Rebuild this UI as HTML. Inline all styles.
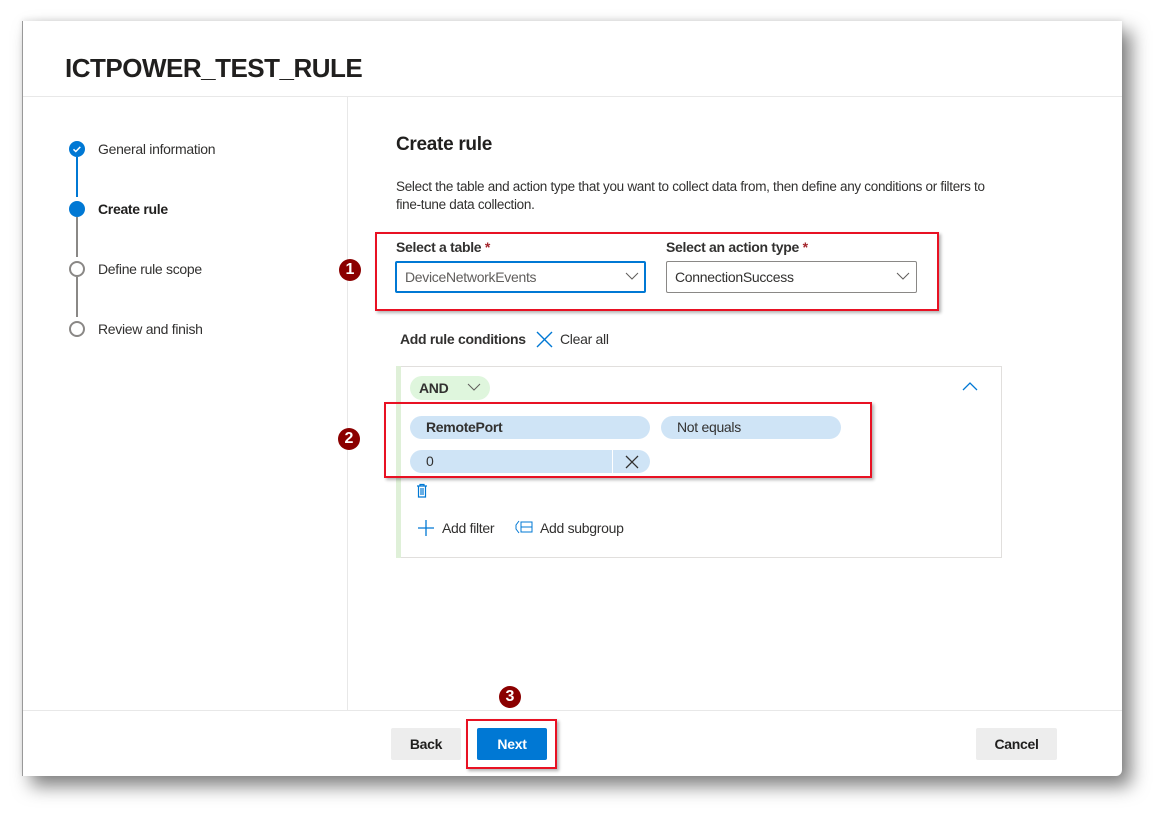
<!DOCTYPE html>
<html><head><meta charset="utf-8"><style>
*{box-sizing:border-box;margin:0;padding:0}
body{width:1165px;height:819px;background:#fff;position:relative;overflow:hidden;font-family:"Liberation Sans",sans-serif;color:#323130;letter-spacing:-0.3px}
.panel{position:absolute;left:22px;top:21px;width:1100px;height:755px;background:#fff;border-left:1px solid #999;border-radius:0 0 6px 0;box-shadow:9px 10px 18px rgba(0,0,0,0.5),0 -2px 6px rgba(0,0,0,0.08)}
.a{position:absolute;white-space:nowrap}
.hl{position:absolute;background:#e8e8e8}
.red{position:absolute;border:2px solid #e81123;box-shadow:2px 2px 3px rgba(0,0,0,0.3)}
.num{position:absolute;width:22px;height:22px;border-radius:50%;background:#8b0000;color:#fff;font-weight:bold;font-size:16px;text-align:center;line-height:22px;letter-spacing:0}
.pill{position:absolute;background:#cfe4f6;border-radius:12px;height:23px;font-size:14px;line-height:23px;padding-left:16px}
.sel{position:absolute;height:32px;border:1px solid #8a8886;border-radius:2px;font-size:14px;line-height:30px;padding-left:8px}
.btn{position:absolute;height:32px;border-radius:2px;font-size:14px;font-weight:bold;text-align:center;line-height:32px}
</style></head><body>
<div class="panel"></div>
<div class="a" style="left:65px;top:53px;font-size:26px;font-weight:bold;color:#201f1e;letter-spacing:-0.5px">ICTPOWER_TEST_RULE</div>
<div class="hl" style="left:23px;top:96px;width:1099px;height:1px"></div>
<div class="hl" style="left:347px;top:97px;width:1px;height:613px"></div>
<div class="hl" style="left:23px;top:710px;width:1099px;height:1px"></div>

<div class="a" style="left:76px;top:157px;width:2px;height:40px;background:#0078d4"></div>
<div class="a" style="left:76px;top:217px;width:2px;height:40px;background:#8a8886"></div>
<div class="a" style="left:76px;top:277px;width:2px;height:40px;background:#8a8886"></div>
<svg class="a" style="left:69px;top:141px" width="16" height="16"><circle cx="8" cy="8" r="8" fill="#0078d4"/><path d="M4.5 8.3l2.3 2.2 4.5-4.6" stroke="#fff" stroke-width="1.5" fill="none"/></svg>
<div class="a" style="left:69px;top:201px;width:16px;height:16px;border-radius:50%;background:#0078d4"></div>
<div class="a" style="left:69px;top:261px;width:16px;height:16px;border-radius:50%;border:2px solid #8a8886"></div>
<div class="a" style="left:69px;top:321px;width:16px;height:16px;border-radius:50%;border:2px solid #8a8886"></div>
<div class="a" style="left:98px;top:141px;font-size:14px">General information</div>
<div class="a" style="left:98px;top:201px;font-size:14px;font-weight:bold;color:#201f1e">Create rule</div>
<div class="a" style="left:98px;top:261px;font-size:14px">Define rule scope</div>
<div class="a" style="left:98px;top:321px;font-size:14px">Review and finish</div>

<div class="a" style="left:396px;top:134px;font-size:19px;font-weight:bold;color:#201f1e">Create rule</div>
<div class="a" style="left:396px;top:178px;font-size:13.5px;line-height:18px;white-space:normal;width:640px">Select the table and action type that you want to collect data from, then define any conditions or filters to<br>fine-tune data collection.</div>

<div class="red" style="left:375px;top:232px;width:564px;height:79px"></div>
<div class="num" style="left:339px;top:259px">1</div>
<div class="a" style="left:396px;top:239px;font-size:14px;font-weight:bold">Select a table <span style="color:#a4262c">*</span></div>
<div class="a" style="left:666px;top:239px;font-size:14px;font-weight:bold">Select an action type <span style="color:#a4262c">*</span></div>
<div class="sel" style="left:395px;top:261px;width:251px;border:2px solid #0078d4;color:#605e5c;line-height:28px">DeviceNetworkEvents</div>
<div class="sel" style="left:666px;top:261px;width:251px">ConnectionSuccess</div>
<svg class="a" style="left:625px;top:271px" width="14" height="10"><path d="M1 2l6 6 6-6" stroke="#605e5c" fill="none"/></svg>
<svg class="a" style="left:896px;top:271px" width="14" height="10"><path d="M1 2l6 6 6-6" stroke="#605e5c" fill="none"/></svg>

<div class="a" style="left:400px;top:331px;font-size:14px;font-weight:bold">Add rule conditions</div>
<svg class="a" style="left:536px;top:331px" width="17" height="17"><path d="M1 1l15 15M16 1L1 16" stroke="#0078d4" stroke-width="1.4"/></svg>
<div class="a" style="left:560px;top:331px;font-size:14px">Clear all</div>

<div class="a" style="left:396px;top:366px;width:606px;height:192px;border:1px solid #e1dfdd"></div>
<div class="a" style="left:396px;top:366px;width:5px;height:192px;background:#dff0d8"></div>
<div class="a" style="left:410px;top:376px;width:80px;height:24px;border-radius:12px;background:#dff6dd"></div>
<div class="a" style="left:419px;top:380px;font-size:14px;font-weight:bold">AND</div>
<svg class="a" style="left:467px;top:383px" width="14" height="9"><path d="M1 1l6 6 6-6" stroke="#605e5c" fill="none"/></svg>
<svg class="a" style="left:962px;top:382px" width="16" height="10"><path d="M1 8l7-7 7 7" stroke="#0078d4" fill="none" stroke-width="1.3"/></svg>

<div class="pill" style="left:410px;top:416px;width:240px;font-weight:bold">RemotePort</div>
<div class="pill" style="left:661px;top:416px;width:180px">Not equals</div>
<div class="pill" style="left:410px;top:450px;width:240px">0</div>
<div class="a" style="left:612px;top:450px;width:1px;height:23px;background:#fff"></div>
<svg class="a" style="left:625px;top:455px" width="14" height="14"><path d="M1 1l12 12M13 1L1 13" stroke="#323130" stroke-width="1.3"/></svg>
<div class="red" style="left:384px;top:402px;width:488px;height:76px"></div>
<div class="num" style="left:338px;top:428px">2</div>
<svg class="a" style="left:416px;top:483px" width="12" height="15"><path d="M1 3h10M4 3V1.5h4V3M2.5 3v11h7V3M5 5v7M7 5v7" stroke="#0078d4" fill="none" stroke-width="1.2"/></svg>

<svg class="a" style="left:417px;top:519px" width="18" height="18"><path d="M9 1v16M1 9h16" stroke="#0078d4" stroke-width="1.3"/></svg>
<div class="a" style="left:442px;top:520px;font-size:14px">Add filter</div>
<svg class="a" style="left:515px;top:520px" width="18" height="14"><path d="M4 1L1 5v4l3 4" stroke="#0078d4" fill="none"/><rect x="6" y="2" width="11" height="10" stroke="#0078d4" fill="none"/><path d="M6 7h11" stroke="#0078d4"/></svg>
<div class="a" style="left:540px;top:520px;font-size:14px">Add subgroup</div>

<div class="num" style="left:499px;top:686px">3</div>
<div class="btn" style="left:391px;top:728px;width:70px;background:#ededed;color:#201f1e">Back</div>
<div class="btn" style="left:477px;top:728px;width:70px;background:#0078d4;color:#fff">Next</div>
<div class="red" style="left:466px;top:719px;width:91px;height:50px"></div>
<div class="btn" style="left:976px;top:728px;width:81px;background:#ededed;color:#201f1e">Cancel</div>
</body></html>
